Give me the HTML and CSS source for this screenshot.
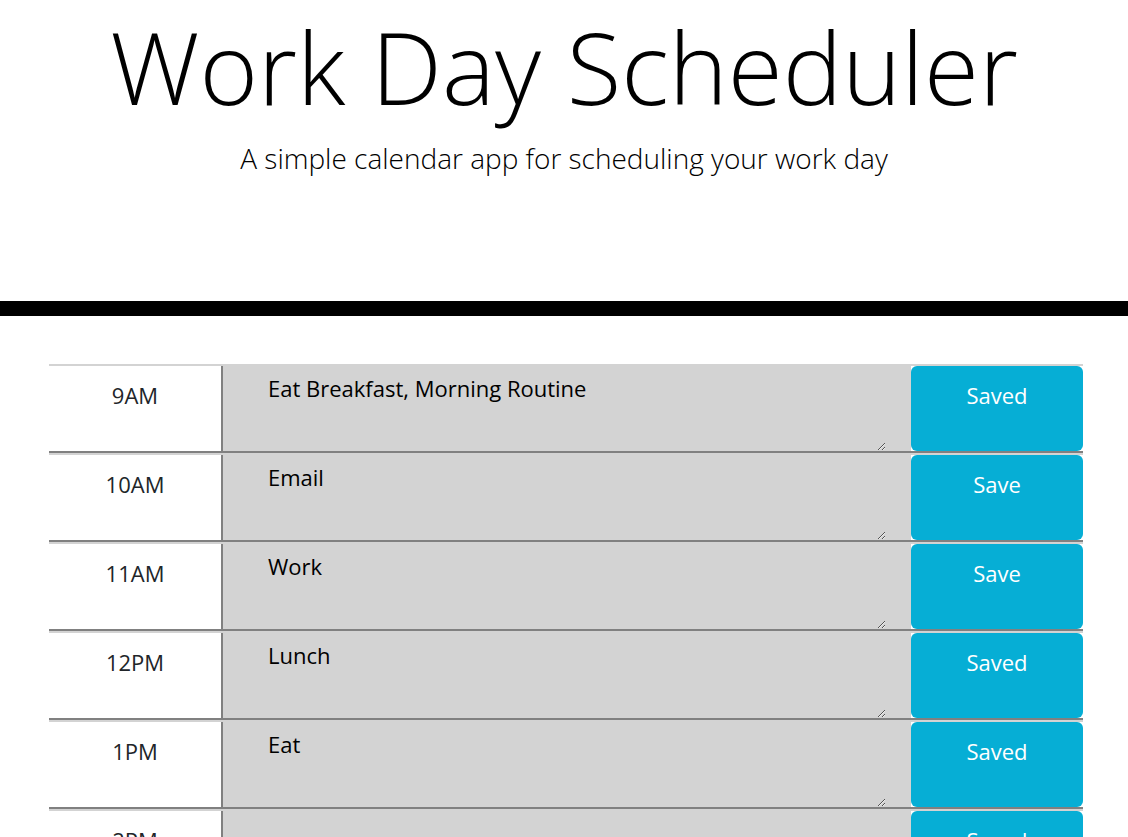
FILE: index.html
```html
<!DOCTYPE html>
<html lang="en">
<head>
<meta charset="utf-8">
<title>Work Day Scheduler</title>
<link rel="stylesheet" href="styles.css">
</head>
<body>
<header class="jumbotron">
  <h1 class="title">Work Day Scheduler</h1>
  <p class="lead">A simple calendar app for scheduling your work day</p>
</header>
<main class="planner">
  <div class="time-block">
    <div class="hour">9AM</div>
    <div class="desc"><textarea>Eat Breakfast, Morning Routine</textarea></div>
    <button class="save-btn">Saved</button>
  </div>
  <div class="time-block">
    <div class="hour">10AM</div>
    <div class="desc"><textarea>Email</textarea></div>
    <button class="save-btn">Save</button>
  </div>
  <div class="time-block">
    <div class="hour">11AM</div>
    <div class="desc"><textarea>Work</textarea></div>
    <button class="save-btn">Save</button>
  </div>
  <div class="time-block">
    <div class="hour">12PM</div>
    <div class="desc"><textarea>Lunch</textarea></div>
    <button class="save-btn">Saved</button>
  </div>
  <div class="time-block">
    <div class="hour">1PM</div>
    <div class="desc"><textarea>Eat</textarea></div>
    <button class="save-btn">Saved</button>
  </div>
  <div class="time-block">
    <div class="hour">2PM</div>
    <div class="desc"><textarea></textarea></div>
    <button class="save-btn">Saved</button>
  </div>
  <div class="time-block">
    <div class="hour">3PM</div>
    <div class="desc"><textarea></textarea></div>
    <button class="save-btn">Save</button>
  </div>
</main>
</body>
</html>
```
FILE: styles.css
```css
* { box-sizing: border-box; }
html, body { margin: 0; padding: 0; background: #fff; }
body {
  font-family: "Open Sans", "Noto Sans", sans-serif;
  color: #212529;
}
.jumbotron {
  text-align: center;
  border-bottom: 15px solid #000;
  padding-top: 1px;
  height: 316px;
}
.title {
  margin: 15px 0 0;
  font-size: 100px;
  font-weight: 300;
  line-height: 1;
  color: #000;
}
.lead {
  margin: 26px 0 0;
  font-size: 28px;
  font-weight: 300;
  line-height: 1.2;
  color: #000;
}
.planner {
  margin: 48px 0 0 49px;
  width: 1034px;
}
.time-block {
  display: flex;
  border-top: 2px solid #d3d3d3;
  border-bottom: 2px solid #808080;
  height: 89px;
}
.hour {
  width: 174px;
  border-right: 2px solid #808080;
  background: #fff;
  text-align: center;
  font-size: 22px;
  line-height: 30px;
  padding-top: 14px;
  color: #212529;
}
.desc {
  flex: 1;
  background: #d3d3d3;
  padding-right: 25px;
  display: flex;
}
.desc textarea {
  flex: 1;
  height: 85px;
  border: none;
  background: transparent;
  font-family: "Open Sans", "Noto Sans", sans-serif;
  font-size: 22px;
  line-height: 30px;
  color: #000;
  padding: 7px 0 0 45px;
  margin: 0;
  outline: none;
}
.save-btn {
  width: 172px;
  height: 85px;
  border: none;
  border-radius: 6px;
  background: #06aed5;
  color: #fff;
  font-family: "Open Sans", "Noto Sans", sans-serif;
  font-size: 22px;
  line-height: 30px;
  display: flex;
  justify-content: center;
  align-items: flex-start;
  padding: 14px 0 0;
  margin: 0;
}
```
